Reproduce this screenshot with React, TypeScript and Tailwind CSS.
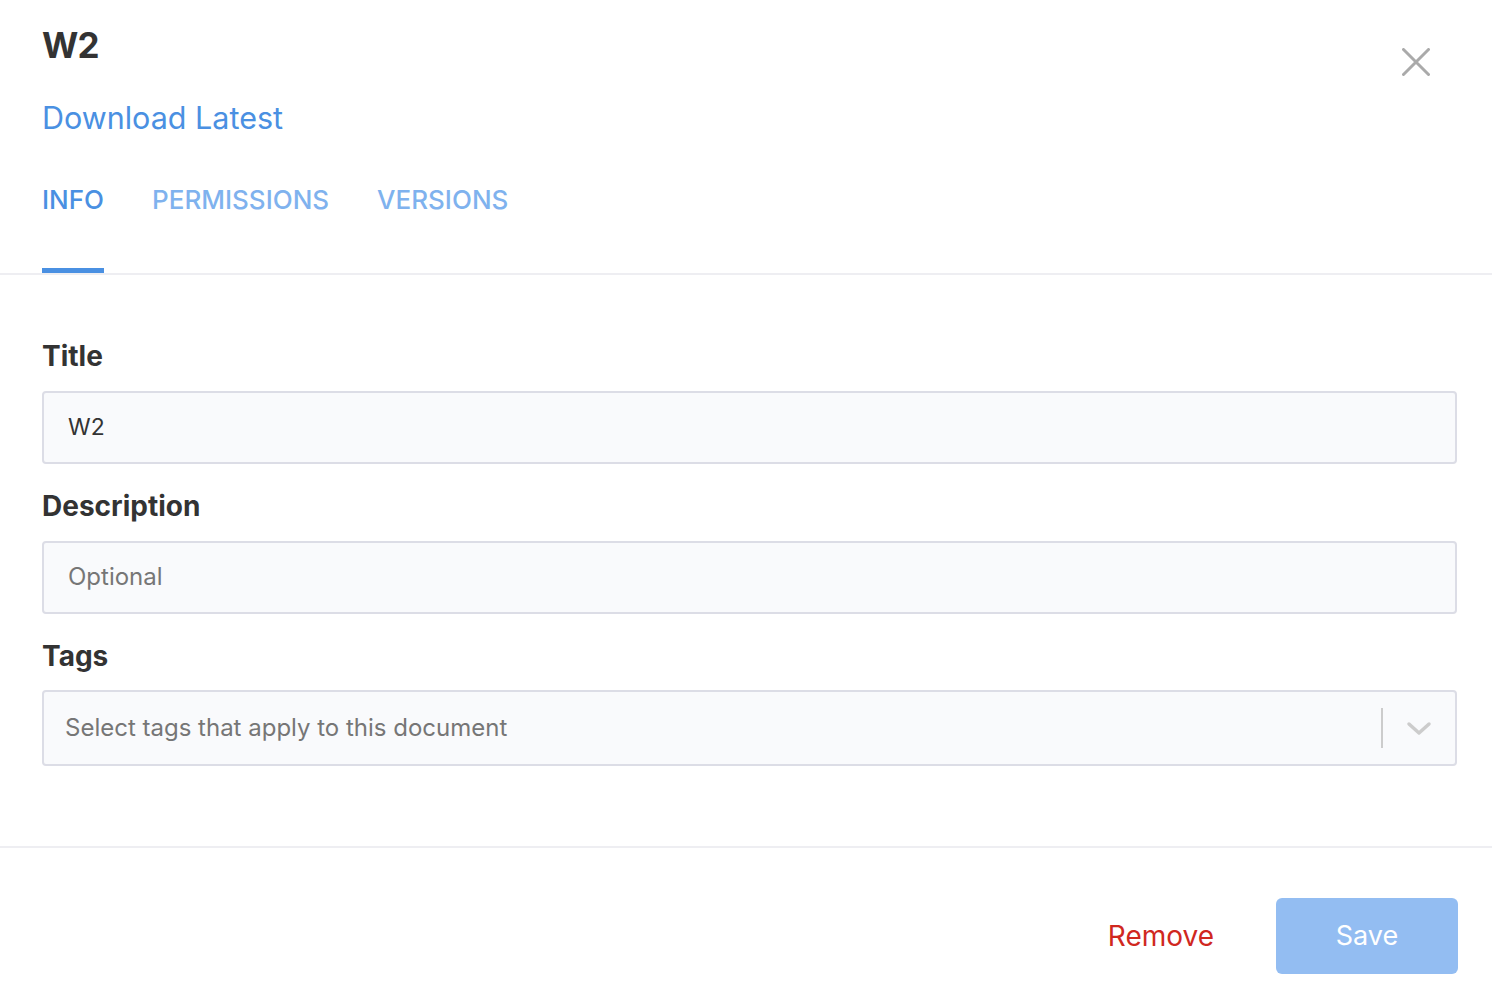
import React from "react";

const font = { fontFamily: "Inter, 'Noto Sans', sans-serif" };

const Label = ({ children }: { children: React.ReactNode }) => (
  <div className="text-[28px] font-bold text-[#333333] leading-none">{children}</div>
);

export default function App() {
  return (
    <div style={font} className="w-[1492px] h-[998px] bg-white flex flex-col">
      {/* header */}
      <div className="pl-[42px] pr-[62px] pt-[28px] flex">
        <div className="flex-1">
          <div className="text-[35px] font-bold text-[#333333] leading-none tracking-tight">W2</div>
          <div className="mt-[40px] text-[30.5px] text-[#4a90e2] leading-none">Download Latest</div>
        </div>
        <svg className="mt-[20px]" width="28" height="28" viewBox="0 0 28 28" fill="none">
          <path d="M1.5 1.5L26.5 26.5M26.5 1.5L1.5 26.5" stroke="#aaaaaa" strokeWidth="3" strokeLinecap="round" />
        </svg>
      </div>

      {/* tabs */}
      <div className="mt-[53px] px-[42px] flex gap-[48px] border-b-2 border-[#eeeef2]">
        {["INFO", "PERMISSIONS", "VERSIONS"].map((t, i) => (
          <div key={t} className="flex flex-col">
            <div
              className={
                "text-[26px] font-medium leading-none pb-[55px] " +
                (i === 0 ? "text-[#4a90e2]" : "text-[#7fb2ee]")
              }
            >
              {t}
            </div>
            <div className={"h-[5px] " + (i === 0 ? "bg-[#4a90e2]" : "bg-transparent")} />
          </div>
        ))}
      </div>

      {/* form */}
      <div className="pl-[42px] pr-[35px] pt-[67px] pb-[80px] flex flex-col border-b-2 border-[#eeeef2]">
        <Label>Title</Label>
        <div className="mt-[21px] h-[73px] rounded-[4px] border-2 border-[#dcdde6] bg-[#f9fafc] flex items-center px-[24px] text-[23px] text-[#333333]">
          W2
        </div>
        <div className="mt-[28px]">
          <Label>Description</Label>
        </div>
        <div className="mt-[21px] h-[73px] rounded-[4px] border-2 border-[#dcdde6] bg-[#f9fafc] flex items-center px-[24px] text-[24px] text-[#767676]">
          Optional
        </div>
        <div className="mt-[28px]">
          <Label>Tags</Label>
        </div>
        <div className="mt-[20px] h-[76px] rounded-[4px] border-2 border-[#dcdde6] bg-[#f9fafc] flex items-center pl-[21px] text-[24px] text-[#767676]">
          <div className="flex-1">Select tags that apply to this document</div>
          <div className="w-[2px] h-[40px] bg-[#cccccc]" />
          <div className="w-[72px] flex items-center justify-center">
            <svg width="26" height="16" viewBox="0 0 26 16" fill="none">
              <path d="M3 4L13 13L23 4" stroke="#cccccc" strokeWidth="3.5" strokeLinecap="round" strokeLinejoin="round" />
            </svg>
          </div>
        </div>
      </div>

      {/* footer */}
      <div className="px-[34px] pt-[50px] flex justify-end items-center gap-[62px]">
        <button className="text-[28px] text-[#d0281f] leading-none">Remove</button>
        <button className="w-[182px] h-[76px] rounded-[6px] bg-[#93bdf2] text-white text-[27px] leading-none">
          Save
        </button>
      </div>
    </div>
  );
}
